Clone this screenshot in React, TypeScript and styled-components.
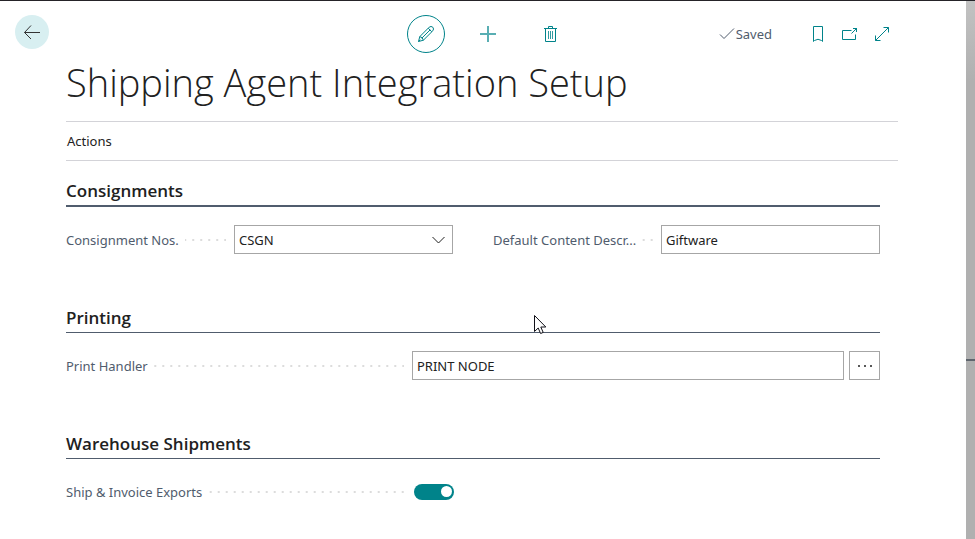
import React from "react";
import styled, { createGlobalStyle } from "styled-components";

const teal = "#00838a";
const slate = "#505c6d";
const ink = "#212121";

const GlobalStyle = createGlobalStyle`
  * { box-sizing: border-box; }
  body {
    margin: 0;
    background: #ffffff;
    color: ${ink};
    font-family: "Noto Sans", "Open Sans", sans-serif;
    font-size: 13px;
    line-height: 20px;
  }
  button, input, select { font: inherit; color: inherit; }
`;

const Window = styled.div`
  display: flex;
  min-height: 100vh;
  border-top: 1px solid #252328;
`;

const Page = styled.main`
  flex: 1;
  min-width: 0;
`;

const Edge = styled.aside`
  display: flex;
  flex-direction: column;
  width: 9px;
  background: linear-gradient(#c2c2c2, #b0b0b0 80px);
`;

const EdgeMark = styled.div`
  height: 2px;
  margin-top: 358px;
  background: #5f656d;
`;

const Toolbar = styled.header`
  display: grid;
  grid-template-columns: 1fr auto 1fr;
  align-items: center;
  padding: 14px 5px 0 15px;
`;

const Group = styled.div<{ $gap: number }>`
  display: flex;
  align-items: center;
  gap: ${(p) => p.$gap}px;
`;

const StatusGroup = styled.div`
  display: flex;
  align-items: center;
  justify-content: flex-end;
  padding-right: 63px;
`;

const IconButton = styled.button<{ $size: number; $ring?: boolean }>`
  display: grid;
  place-items: center;
  width: ${(p) => p.$size}px;
  height: ${(p) => p.$size}px;
  padding: 0;
  border: ${(p) => (p.$ring ? `1px solid ${teal}` : "0")};
  border-radius: 50%;
  background: transparent;
  color: ${teal};
`;

const BackButton = styled(IconButton)`
  align-self: start;
  background: #d8eff1;
  color: #333333;
`;

const Saved = styled.span`
  display: flex;
  align-items: center;
  gap: 1px;
  margin-right: 30px;
  color: ${slate};
`;

const Content = styled.div`
  padding: 0 68px 32px 66px;
`;

const Title = styled.h1`
  margin: 0;
  padding-bottom: 10px;
  font-family: "Open Sans", "Noto Sans", sans-serif;
  font-size: 38px;
  font-weight: 300;
  line-height: 58px;
  white-space: nowrap;
`;

const ActionBar = styled.nav`
  display: flex;
  align-items: center;
  height: 40px;
  border-top: 1px solid #d3d3d8;
  border-bottom: 1px solid #d3d3d8;
`;

const ActionButton = styled.button`
  padding: 0 1px;
  border: 0;
  background: transparent;
`;

const Form = styled.form`
  display: grid;
  gap: 51px;
  padding: 17px 18px 0 0;
`;

const Heading = styled.h2<{ $strong?: boolean }>`
  margin: 0 0 18px;
  padding-bottom: 2px;
  border-bottom: ${(p) => (p.$strong ? 2 : 1)}px solid ${slate};
  font-family: "Open Sans", "Noto Sans", sans-serif;
  font-size: 17px;
  font-weight: 600;
  line-height: 25px;
`;

const Columns = styled.div`
  display: grid;
  grid-template-columns: 1fr 1fr;
  gap: 40px;
`;

const Field = styled.div<{ $wide?: boolean }>`
  display: grid;
  grid-template-columns: ${(p) => (p.$wide ? "346fr 468fr" : "168fr 219fr")};
  align-items: center;
  min-height: 29px;
`;

const Caption = styled.div`
  display: flex;
  align-items: center;
  min-width: 0;
  padding-right: 8px;
  color: ${slate};
  white-space: nowrap;
`;

const Leader = styled.span`
  flex: 1;
  height: 2px;
  margin-left: 6px;
  background: linear-gradient(90deg, transparent 6px, #dcdcdc 6px) right / 8px 2px repeat-x;
`;

const Controls = styled.div`
  display: flex;
  gap: 5px;
  min-width: 0;
`;

const TextBox = styled.input`
  flex: 1;
  min-width: 0;
  height: 29px;
  padding: 0 4px;
  border: 1px solid #a6a6a6;
  border-radius: 0;
  background: #ffffff;
`;

const SelectWrap = styled.div`
  position: relative;
  flex: 1;
  min-width: 0;

  svg {
    position: absolute;
    top: 11px;
    right: 8px;
    pointer-events: none;
  }
`;

const Select = styled.select`
  display: block;
  width: 100%;
  height: 29px;
  padding: 0 24px 0 4px;
  border: 1px solid #a6a6a6;
  border-radius: 0;
  background: #ffffff;
  appearance: none;
`;

const MoreButton = styled.button`
  display: grid;
  place-items: center;
  width: 31px;
  height: 29px;
  padding: 0;
  border: 1px solid #a6a6a6;
  background: #ffffff;
`;

const Switch = styled.input`
  display: flex;
  align-items: center;
  justify-content: flex-end;
  width: 40px;
  height: 16px;
  margin: 0 2px;
  padding: 0 2px;
  border-radius: 8px;
  background: #8a8a8a;
  appearance: none;

  &::before {
    content: "";
    width: 11px;
    height: 11px;
    border-radius: 50%;
    background: #ffffff;
  }
  &:not(:checked) { justify-content: flex-start; }
  &:checked { background: ${teal}; }
`;

const Pointer = styled.svg`
  position: absolute;
  top: 315px;
  left: 534px;
  pointer-events: none;
`;

type IconProps = { w: number; h: number; children: React.ReactNode };

const Icon = ({ w, h, children }: IconProps) => (
  <svg width={w} height={h} viewBox={`0 0 ${w} ${h}`} fill="none" stroke="currentColor" aria-hidden="true">
    {children}
  </svg>
);

type FieldRowProps = { id: string; label: string; wide?: boolean; children: React.ReactNode };

const FieldRow = ({ id, label, wide, children }: FieldRowProps) => (
  <Field $wide={wide}>
    <Caption>
      <label htmlFor={id}>{label}</label>
      <Leader />
    </Caption>
    <Controls>{children}</Controls>
  </Field>
);

export default function App() {
  return (
    <Window>
      <GlobalStyle />
      <Page>
        <Toolbar>
          <BackButton $size={34} aria-label="Back">
            <Icon w={18} h={16}>
              <path d="M17 8.5H1.5M8 1.5L1.5 8.5L8 15" />
            </Icon>
          </BackButton>
          <Group $gap={24}>
            <IconButton $size={38} $ring aria-label="Edit">
              <Icon w={18} h={18}>
                <path d="M1.5 16.5L2.8 11.6L12.2 2.2Q14 .7 15.8 2.2Q17.3 4 15.8 5.8L6.4 15.2ZM2.8 11.6Q5.6 12 6.4 15.2M4.7 13.3L13.2 4.8M11.2 3.2L14.8 6.8M1.5 16.5L3.3 14.7" />
              </Icon>
            </IconButton>
            <IconButton $size={38} aria-label="New">
              <Icon w={18} h={18}>
                <path d="M9 1V17M1 9H17" strokeWidth="2" opacity="0.65" />
              </Icon>
            </IconButton>
            <IconButton $size={38} aria-label="Delete">
              <Icon w={15} h={18}>
                <path d="M1 3.5H14M5.5 3.5V1.5H9.5V3.5M2.5 3.5V16.5H12.5V3.5" />
                <path d="M5.5 6V14M7.5 6V14M9.5 6V14" opacity="0.8" />
              </Icon>
            </IconButton>
          </Group>
          <StatusGroup>
            <Saved>
              <Icon w={16} h={14}>
                <path d="M1 7.5L5 11.5L15 1.5" />
              </Icon>
              Saved
            </Saved>
            <IconButton $size={32} aria-label="Bookmark">
              <Icon w={12} h={18}>
                <path d="M1.5 1.5H10.5V16.5L9.5 15.5Q6 13 2.5 15.5L1.5 16.5Z" />
              </Icon>
            </IconButton>
            <IconButton $size={32} aria-label="Open in new window">
              <Icon w={18} h={16}>
                <path d="M10.5 4.5H1.5V13.5H14.5V8.5M10.5 7.5L16 2M12 2.5H15.5V6" />
              </Icon>
            </IconButton>
            <IconButton $size={32} aria-label="Expand">
              <Icon w={16} h={16}>
                <path d="M1.5 14.5L14.5 1.5M9.5 1.5H14.5V6.5M1.5 9.5V14.5H6.5" />
              </Icon>
            </IconButton>
          </StatusGroup>
        </Toolbar>

        <Content>
          <Title>Shipping Agent Integration Setup</Title>
          <ActionBar>
            <ActionButton>Actions</ActionButton>
          </ActionBar>

          <Form>
            <section>
              <Heading $strong>Consignments</Heading>
              <Columns>
                <FieldRow id="nos" label="Consignment Nos.">
                  <SelectWrap>
                    <Select id="nos" defaultValue="CSGN">
                      <option>CSGN</option>
                    </Select>
                    <Icon w={13} h={8}>
                      <path d="M.5 1L6.5 7L12.5 1" />
                    </Icon>
                  </SelectWrap>
                </FieldRow>
                <FieldRow id="descr" label="Default Content Descr...">
                  <TextBox id="descr" defaultValue="Giftware" />
                </FieldRow>
              </Columns>
            </section>

            <section>
              <Heading>Printing</Heading>
              <FieldRow id="handler" label="Print Handler" wide>
                <TextBox id="handler" defaultValue="PRINT NODE" />
                <MoreButton type="button" aria-label="Choose print handler">
                  <svg width="16" height="4" fill={ink} aria-hidden="true">
                    <circle cx="2" cy="2" r="1" />
                    <circle cx="8" cy="2" r="1" />
                    <circle cx="14" cy="2" r="1" />
                  </svg>
                </MoreButton>
              </FieldRow>
            </section>

            <section>
              <Heading>Warehouse Shipments</Heading>
              <FieldRow id="exports" label="Ship &amp; Invoice Exports" wide>
                <Switch id="exports" type="checkbox" role="switch" defaultChecked />
              </FieldRow>
            </section>
          </Form>
        </Content>
      </Page>
      <Edge>
        <EdgeMark />
      </Edge>
      <Pointer width="13" height="20" viewBox="0 0 13 20" aria-hidden="true">
        <path
          d="M.5 .5V16.5L4.2 13L6.6 18.5L9.2 17.4L6.8 12H11.8Z"
          fill="#ffffff"
          stroke="#101018"
        />
      </Pointer>
    </Window>
  );
}
